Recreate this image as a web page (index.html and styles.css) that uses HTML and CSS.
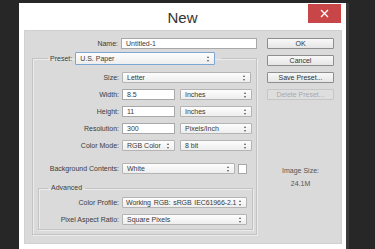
FILE: index.html
```html
<!DOCTYPE html>
<html lang="en">
<head>
    <meta charset="UTF-8">
    <title>New</title>
    <link rel="stylesheet" href="styles.css">
</head>
<body>
    <div class="dialog">
        <div class="title-bar">
            <span class="title">New</span>
            <div class="close-btn">
                <svg width="9" height="9" viewBox="0 0 9 9"><path d="M1 1 L8 8 M8 1 L1 8" stroke="#fff" stroke-width="1.3" fill="none"/></svg>
            </div>
        </div>
        <div class="panel">
            <div class="main-col">
                <div class="row name-row">
                    <span class="lbl">Name:</span>
                    <div class="field w-name">Untitled-1</div>
                </div>

                <fieldset class="group">
                    <legend class="preset-legend">
                        <span class="lbl-inline">Preset:</span>
                        <div class="select focused w-preset">U.S. Paper<span class="arrows"></span></div>
                    </legend>
                    <div class="rows">
                        <div class="row">
                            <span class="lbl">Size:</span>
                            <div class="select w-size">Letter<span class="arrows"></span></div>
                        </div>
                        <div class="row">
                            <span class="lbl">Width:</span>
                            <div class="field w-num">8.5</div>
                            <div class="select w-unit">Inches<span class="arrows"></span></div>
                        </div>
                        <div class="row">
                            <span class="lbl">Height:</span>
                            <div class="field w-num">11</div>
                            <div class="select w-unit">Inches<span class="arrows"></span></div>
                        </div>
                        <div class="row">
                            <span class="lbl">Resolution:</span>
                            <div class="field w-num">300</div>
                            <div class="select w-unit">Pixels/Inch<span class="arrows"></span></div>
                        </div>
                        <div class="row">
                            <span class="lbl">Color Mode:</span>
                            <div class="select w-mode">RGB Color<span class="arrows"></span></div>
                            <div class="select w-unit">8 bit<span class="arrows"></span></div>
                        </div>
                        <div class="row bg-row">
                            <span class="lbl">Background Contents:</span>
                            <div class="select w-bg">White<span class="arrows"></span></div>
                            <div class="swatch"></div>
                        </div>
                    </div>

                    <fieldset class="group advanced">
                        <legend class="adv-legend">Advanced</legend>
                        <div class="rows">
                            <div class="row">
                                <span class="lbl">Color Profile:</span>
                                <div class="select w-prof tight">Working RGB: sRGB IEC61966-2.1<span class="arrows"></span></div>
                            </div>
                            <div class="row">
                                <span class="lbl">Pixel Aspect Ratio:</span>
                                <div class="select w-prof">Square Pixels<span class="arrows"></span></div>
                            </div>
                        </div>
                    </fieldset>
                </fieldset>
            </div>

            <div class="side-col">
                <div class="btn">OK</div>
                <div class="btn">Cancel</div>
                <div class="btn">Save Preset...</div>
                <div class="btn disabled">Delete Preset...</div>
                <div class="image-size">
                    <div>Image Size:</div>
                    <div class="size-value">24.1M</div>
                </div>
            </div>
        </div>
    </div>
</body>
</html>
```

FILE: styles.css
```css
:root {
    --dark: #272727;
    --panel: #dadada;
    --text: #3a3a3a;
    --line: #c3c3c3;
    --field-border: #a8a8a8;
}

body {
    margin: 0;
    background: var(--dark);
    font-family: 'Liberation Sans', Arial, sans-serif;
    font-size: 7px;
    color: var(--text);
    height: 249px;
    overflow: hidden;
}

.dialog {
    margin: 3px 0 0 19px;
    width: 327px;
    background: #fff;
    padding-bottom: 5px;
    box-shadow: 3px 0 0 #3a3a3a;
}

.title-bar {
    position: relative;
    height: 27px;
    display: flex;
    align-items: center;
    justify-content: center;
}

.title {
    font-size: 15px;
    color: #333;
    margin-top: 2px;
}

.close-btn {
    position: absolute;
    top: 1px;
    right: 5px;
    width: 33px;
    height: 19px;
    background: #c84648;
    display: flex;
    align-items: center;
    justify-content: center;
}

.panel {
    margin: 0 4px 0 5px;
    height: 214px;
    box-sizing: border-box;
    background: var(--panel);
    border: 1px solid #d0d0d0;
    display: flex;
    padding-top: 7px;
}

.main-col {
    width: 234px;
}

.row {
    display: flex;
    align-items: center;
    height: 11px;
    gap: 5px;
}

.lbl {
    text-align: right;
    white-space: nowrap;
    margin-right: -2px;
}

.name-row .lbl { width: 93px; }
.group .lbl { width: 86px; }
.advanced .lbl { width: 80px; }

.field, .select {
    box-sizing: border-box;
    height: 11px;
    line-height: 9px;
    padding-left: 4px;
    white-space: nowrap;
    overflow: hidden;
}

.field {
    background: #fff;
    border: 1px solid var(--field-border);
}

.select {
    position: relative;
    background: linear-gradient(#fdfdfd, #eeeeee);
    border: 1px solid #b4b4b4;
    border-radius: 1px;
}

.select.tight {
    padding-left: 3px;
    letter-spacing: -0.1px;
    word-spacing: 1px;
}

.select.focused {
    border-color: #7ea6d3;
    height: 13px;
    line-height: 11px;
}

/* tiny up/down arrows on the right of each dropdown */
.arrows {
    position: absolute;
    right: 4px;
    top: 50%;
    margin-top: -3px;
    width: 3px;
    height: 6px;
}
.arrows::before, .arrows::after {
    content: "";
    position: absolute;
    left: 0;
    border-left: 1.5px solid transparent;
    border-right: 1.5px solid transparent;
}
.arrows::before {
    top: 0;
    border-bottom: 2px solid #555;
}
.arrows::after {
    bottom: 0;
    border-top: 2px solid #555;
}

.w-name { width: 136px; }
.w-preset { width: 140px; }
.w-size { width: 129px; }
.w-num { width: 53px; }
.w-mode { width: 53px; }
.w-unit { width: 72px; }
.w-bg { width: 113px; }
.w-prof { width: 125px; }

.swatch {
    width: 9px;
    height: 10px;
    box-sizing: border-box;
    background: #fff;
    border: 1px solid #a8a8a8;
    margin-left: -2px;
}

.group {
    margin: 3px 0 0 7px;
    padding: 0 0 4px 0;
    width: 225px;
    box-sizing: border-box;
    border: 1px solid var(--line);
    box-shadow: inset 1px 1px 0 #ececec, 1px 1px 0 #ececec;
}

.preset-legend {
    display: flex;
    align-items: center;
    gap: 3px;
    padding: 0 6px 0 2px;
    margin-left: 15px;
}

.rows {
    display: flex;
    flex-direction: column;
    gap: 6px;
    padding-top: 7px;
}

.bg-row {
    margin-top: 6px;
}

.advanced {
    margin: 9px 0 0 5px;
    width: 215px;
    padding-bottom: 4px;
}

.advanced .rows {
    padding-top: 4px;
}

.adv-legend {
    padding: 0 3px;
    margin-left: 9px;
    line-height: 10px;
}

.side-col {
    margin-left: 8px;
    width: 67px;
    display: flex;
    flex-direction: column;
    gap: 6px;
}

.btn {
    box-sizing: border-box;
    height: 11px;
    line-height: 9px;
    text-align: center;
    border: 1px solid #8e8e8e;
    border-radius: 1px;
    background: linear-gradient(#f8f8f8, #e6e6e6);
    color: #333;
}

.btn.disabled {
    border-color: #c6c6c6;
    background: #dedede;
    color: #a9a9a9;
}

.image-size {
    margin-top: 58px;
    text-align: center;
    line-height: 13px;
    color: #555;
}
```
